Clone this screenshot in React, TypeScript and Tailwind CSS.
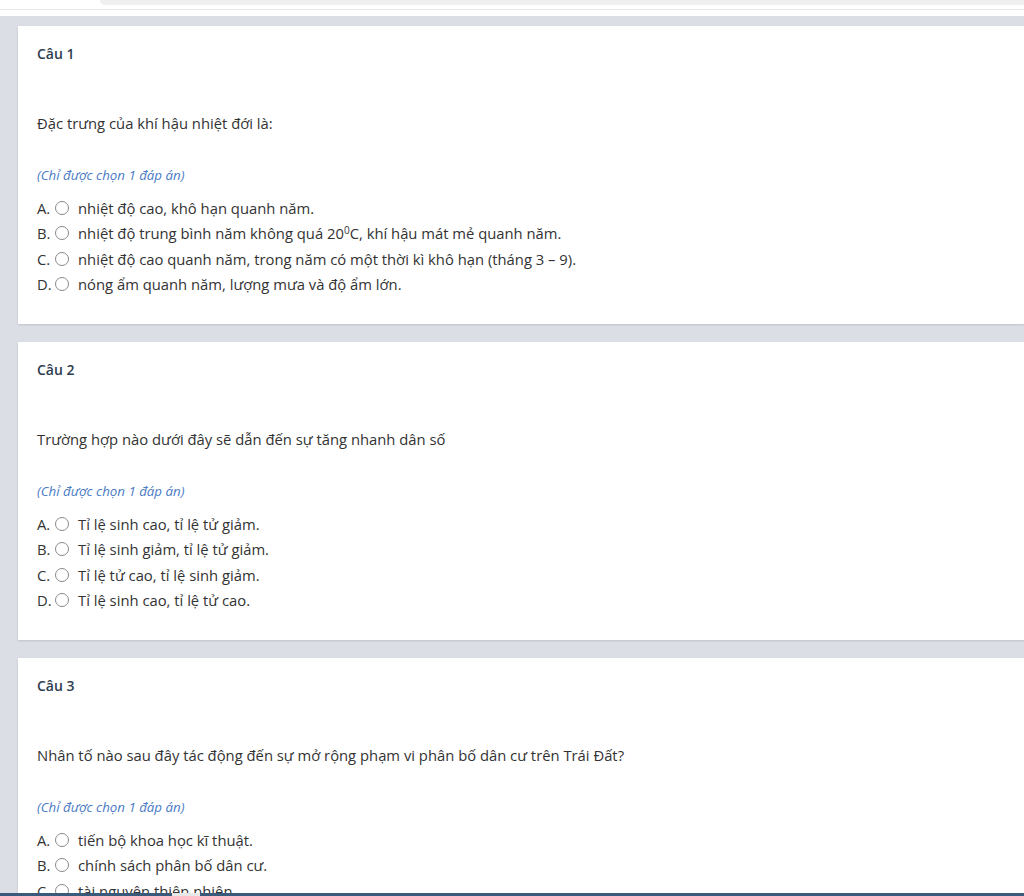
import React from "react";

type Question = {
  label: string;
  text: React.ReactNode;
  options: React.ReactNode[];
};

const questions: Question[] = [
  {
    label: "Câu 1",
    text: "Đặc trưng của khí hậu nhiệt đới là:",
    options: [
      "nhiệt độ cao, khô hạn quanh năm.",
      <>
        nhiệt độ trung bình năm không quá 20<sup className="text-[10px]">0</sup>C, khí hậu mát mẻ quanh năm.
      </>,
      "nhiệt độ cao quanh năm, trong năm có một thời kì khô hạn (tháng 3 – 9).",
      "nóng ẩm quanh năm, lượng mưa và độ ẩm lớn.",
    ],
  },
  {
    label: "Câu 2",
    text: "Trường hợp nào dưới đây sẽ dẫn đến sự tăng nhanh dân số",
    options: [
      "Tỉ lệ sinh cao, tỉ lệ tử giảm.",
      "Tỉ lệ sinh giảm, tỉ lệ tử giảm.",
      "Tỉ lệ tử cao, tỉ lệ sinh giảm.",
      "Tỉ lệ sinh cao, tỉ lệ tử cao.",
    ],
  },
  {
    label: "Câu 3",
    text: "Nhân tố nào sau đây tác động đến sự mở rộng phạm vi phân bố dân cư trên Trái Đất?",
    options: [
      "tiến bộ khoa học kĩ thuật.",
      "chính sách phân bố dân cư.",
      "tài nguyên thiên nhiên.",
      "điều kiện tự nhiên.",
    ],
  },
];

const letters = ["A.", "B.", "C.", "D."];

function QuestionCard({ q }: { q: Question }) {
  return (
    <div className="h-[298px] shrink-0 bg-white pl-[19px] pt-[18px] shadow-[0_1px_2px_rgba(0,0,0,0.12)]">
      <div className="h-5 text-[14px] leading-5 font-semibold text-[#2e3d4f]">{q.label}</div>
      <div className="mt-[49px] h-5 text-[14.8px] leading-5 text-[#333]">{q.text}</div>
      <div className="mt-[32px] h-5 text-[13.3px] leading-5 italic text-[#4a7bc4]">
        (Chỉ được chọn 1 đáp án)
      </div>
      <div className="mt-[10px] flex flex-col">
        {q.options.map((opt, i) => (
          <div key={i} className="flex h-[25.5px] items-center text-[14.8px] text-[#333]">
            <span className="w-[18px] text-[#333]">{letters[i]}</span>
            <span className="h-[14px] w-[14px] rounded-full border border-[#8a8a8a] bg-white" />
            <span className="ml-[9px]">{opt}</span>
          </div>
        ))}
      </div>
    </div>
  );
}

export default function App() {
  return (
    <div
      className="flex h-[896px] w-[1024px] flex-col overflow-hidden bg-[#dcdee6]"
      style={{ fontFamily: '"Open Sans", "Noto Sans", sans-serif' }}
    >
      <div className="relative h-4 shrink-0 bg-white">
        <div className="absolute left-[100px] right-0 top-0 h-[5px] rounded-bl-[8px] bg-[#efefef]" />
        <div className="absolute left-0 right-0 top-[9px] h-px bg-[#e6e6e6]" />
      </div>
      <div className="flex min-h-0 flex-1 flex-col gap-[18px] overflow-hidden pl-[18px] pt-[10px]">
        {questions.map((q) => (
          <QuestionCard key={q.label} q={q} />
        ))}
      </div>
      <div className="relative h-[3px] shrink-0 bg-[#3a5a7c]">
        <div className="absolute left-[172px] top-0 h-[3px] w-7 bg-[#e8e8e8]" />
      </div>
    </div>
  );
}
